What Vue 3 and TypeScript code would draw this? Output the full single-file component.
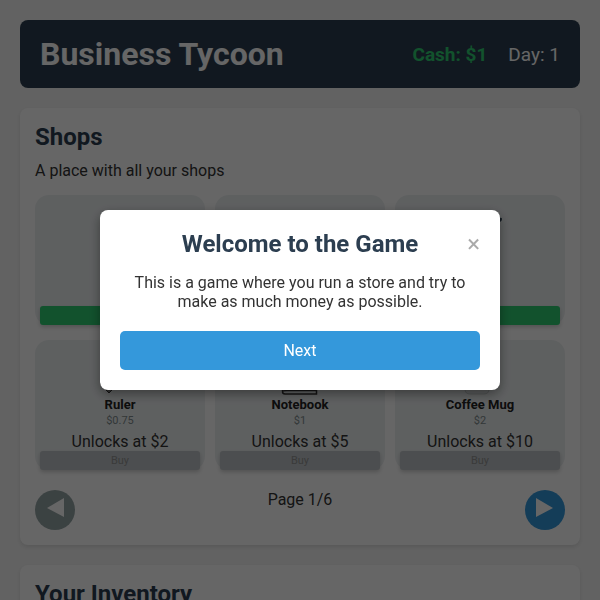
<script setup lang="ts">
import { ref } from 'vue'

interface Product {
  name: string
  price: string
  unlock?: string
  art: 'pencil' | 'eraser' | 'pen' | 'ruler' | 'notebook' | 'mug'
}

const products: Product[] = [
  { name: '', price: '', art: 'pencil' },
  { name: '', price: '', art: 'eraser' },
  { name: '', price: '', art: 'pen' },
  { name: 'Ruler', price: '$0.75', unlock: '$2', art: 'ruler' },
  { name: 'Notebook', price: '$1', unlock: '$5', art: 'notebook' },
  { name: 'Coffee Mug', price: '$2', unlock: '$10', art: 'mug' },
]

const tutorialOpen = ref(true)
</script>

<template>
  <div class="page">
    <header class="topbar">
      <h1>Business Tycoon</h1>
      <div class="stats">
        <span class="cash">Cash: $1</span>
        <span>Day: 1</span>
      </div>
    </header>

    <section class="panel">
      <h2>Shops</h2>
      <p class="intro">A place with all your shops</p>
      <div class="grid">
        <article v-for="product in products" :key="product.art" class="tile">
          <svg class="art" viewBox="0 0 50 50" aria-hidden="true">
            <path v-if="product.art === 'pen'" d="M6 40 44 18q3-1 3 1t-2 3L12 42l-7 1z" fill="#2c3e50" />
            <path v-if="product.art === 'ruler'" d="M5 39 40 4l9 9-35 35z" fill="#777" stroke="#333" stroke-width="1" />
            <path v-if="product.art === 'notebook'" d="M7.500 46V6q0-3 3-3h31v46H10q-2.500 0-2.500-2.500Q7.500 45.500 12 45.500h29" fill="none" stroke="#333" stroke-width="1.500" />
            <path v-if="product.art === 'mug'" d="M10 16h24v28q0 5-5 5H15q-5 0-5-5z" fill="#e2e6e7" stroke="#c5cacb" stroke-width="1" />
          </svg>
          <h3>{{ product.name }}</h3>
          <p class="price">{{ product.price }}</p>
          <p v-if="product.unlock" class="unlock">Unlocks at {{ product.unlock }}</p>
          <button class="buy" type="button" :disabled="!!product.unlock">{{ product.unlock ? 'Buy' : '' }}</button>
        </article>
      </div>
      <nav class="pager">
        <button class="arrow" type="button" disabled aria-label="Previous page">
          <svg viewBox="0 0 40 40" aria-hidden="true"><path d="M12 18 29 8v19z" fill="#fff" /></svg>
        </button>
        <span>Page 1/6</span>
        <button class="arrow" type="button" aria-label="Next page">
          <svg viewBox="0 0 40 40" aria-hidden="true"><path d="M28 18 11 8v19z" fill="#fff" /></svg>
        </button>
      </nav>
    </section>

    <section class="panel">
      <h2>Your Inventory</h2>
    </section>
  </div>

  <div v-if="tutorialOpen" class="overlay">
    <div class="dialog" role="dialog" aria-modal="true" aria-labelledby="dialog-title">
      <button class="close" type="button" @click="tutorialOpen = false">×</button>
      <h2 id="dialog-title">Welcome to the Game</h2>
      <p>This is a game where you run a store and try to make as much money as possible.</p>
      <button class="next" type="button">Next</button>
    </div>
  </div>
</template>

<style>
body {
  margin: 0;
  height: 100vh;
  overflow: hidden;
  background: #f5f5f5;
}
</style>

<style scoped>
.page,
.overlay {
  box-sizing: border-box;
  font-family: Roboto, sans-serif;
  font-size: 16px;
  line-height: 19px;
  color: #333;
}

.page {
  display: flex;
  flex-direction: column;
  gap: 20px;
  padding: 20px;
}

h1,
h2,
h3,
p {
  margin: 0;
}

button {
  border: 0;
  padding: 0;
  font-family: inherit;
  cursor: pointer;
}

.topbar {
  display: flex;
  align-items: center;
  justify-content: space-between;
  padding: 15px 20px;
  border-radius: 8px;
  background: #2c3e50;
  color: #fff;
}

h1 {
  font-size: 32px;
  line-height: 38px;
}

.stats {
  display: flex;
  gap: 21px;
  font-size: 19px;
  line-height: 23px;
}

.cash {
  font-weight: 700;
  color: #2ecc71;
}

.panel {
  padding: 15px;
  border-radius: 8px;
  background: #fff;
  box-shadow: 0 2px 4px rgba(0, 0, 0, 0.1);
}

h2 {
  font-size: 24px;
  line-height: 28px;
  color: #2c3e50;
}

.intro {
  padding: 10px 0 15px;
}

.grid {
  display: grid;
  grid-template-columns: repeat(3, 1fr);
  gap: 15px 10px;
}

.tile {
  display: flex;
  flex-direction: column;
  align-items: center;
  box-sizing: border-box;
  height: 130px;
  padding: 5px 5px 0;
  border-radius: 14px;
  background: #ecf0f1;
  text-align: center;
}

.art {
  width: 50px;
  height: 50px;
  flex: none;
}

h3 {
  height: 18px;
  font-size: 13px;
  line-height: 19px;
  color: #222;
}

.price {
  height: 14px;
  font-size: 11px;
  line-height: 15px;
  color: #7f8c8d;
}

.unlock {
  margin-top: auto;
}

.buy {
  width: 100%;
  height: 19px;
  flex: none;
  margin-top: auto;
  border-radius: 3px;
  background: #2ecc71;
  box-shadow: 0 2px 4px rgba(0, 0, 0, 0.2);
  color: #fff;
  font-size: 11px;
}

.unlock + .buy {
  margin-top: 0;
}

.buy:disabled {
  background: #bdc3c7;
  color: #929292;
}

.pager {
  display: flex;
  justify-content: space-between;
  padding-top: 20px;
}

.arrow {
  width: 40px;
  height: 40px;
  border-radius: 50%;
  background: #3498db;
}

.arrow:disabled {
  background: #95a5a6;
}

.arrow svg {
  display: block;
}

.overlay {
  position: fixed;
  inset: 0;
  display: flex;
  align-items: center;
  justify-content: center;
  padding: 20px;
  background: rgba(0, 0, 0, 0.6);
}

.dialog {
  position: relative;
  box-sizing: border-box;
  width: 100%;
  max-width: 400px;
  padding: 20px;
  border-radius: 8px;
  background: #fff;
  box-shadow: 0 4px 12px rgba(0, 0, 0, 0.4);
  text-align: center;
}

.dialog p {
  padding: 15px 0 20px;
}

.close {
  position: absolute;
  top: 20px;
  right: 20px;
  background: none;
  color: #aaa;
  font-size: 24px;
  line-height: 28px;
}

.next {
  width: 100%;
  height: 39px;
  border-radius: 5px;
  background: #3498db;
  color: #fff;
  font-size: 16px;
}
</style>
